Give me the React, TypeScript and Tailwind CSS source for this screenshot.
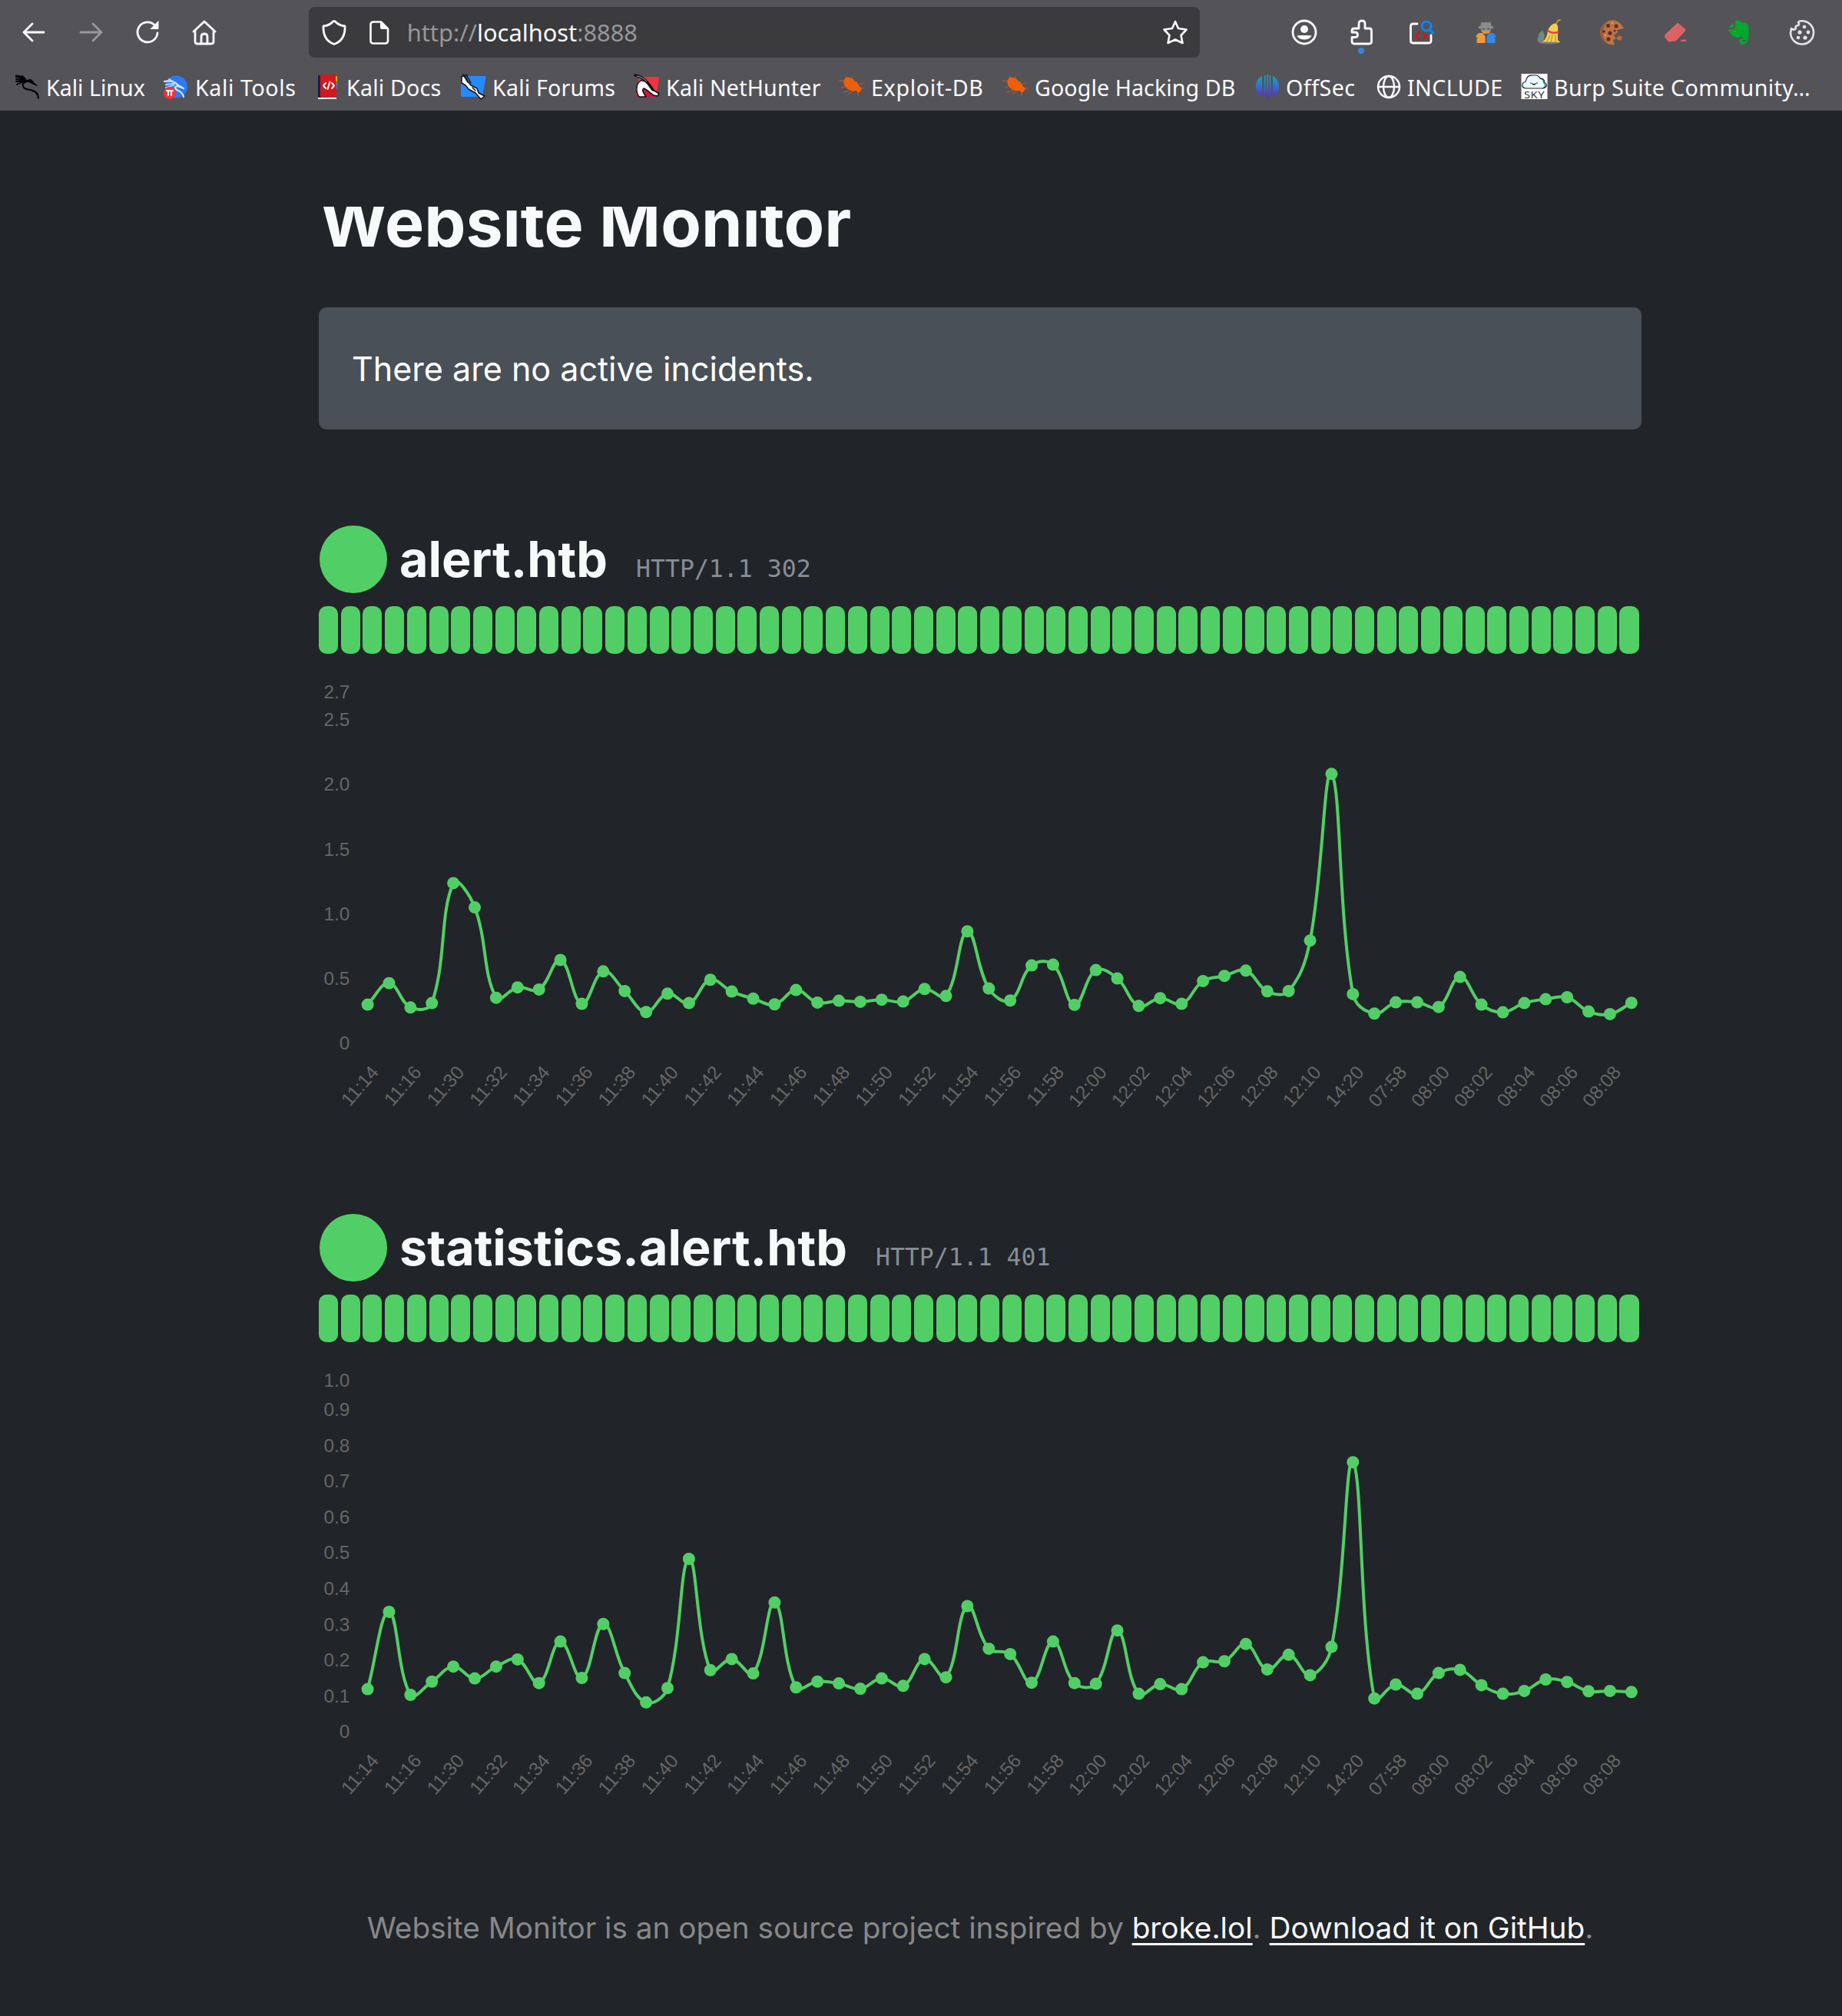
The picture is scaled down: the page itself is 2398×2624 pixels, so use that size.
import type { ReactNode } from "react";

type Site = {
  host: string;
  status: string;
  max: number;
  ticks: number[];
  values: number[];
};

const times = [
  "11:14", "11:16", "11:30", "11:32", "11:34", "11:36", "11:38", "11:40", "11:42", "11:44",
  "11:46", "11:48", "11:50", "11:52", "11:54", "11:56", "11:58", "12:00", "12:02", "12:04",
  "12:06", "12:08", "12:10", "14:20", "07:58", "08:00", "08:02", "08:04", "08:06", "08:08",
];

const sites: Site[] = [
  {
    host: "alert.htb",
    status: "HTTP/1.1 302",
    max: 2.712,
    ticks: [0, 0.5, 1, 1.5, 2, 2.5],
    values: [
      0.299, 0.465, 0.277, 0.311, 1.238, 1.05, 0.352, 0.432, 0.416, 0.644, 0.305, 0.556, 0.404, 0.242, 0.384,
      0.311, 0.491, 0.4, 0.345, 0.301, 0.412, 0.315, 0.329, 0.321, 0.337, 0.323, 0.42, 0.366, 0.865, 0.424,
      0.331, 0.602, 0.608, 0.297, 0.566, 0.501, 0.289, 0.349, 0.305, 0.481, 0.521, 0.562, 0.402, 0.404, 0.794,
      2.081, 0.38, 0.23, 0.317, 0.317, 0.281, 0.513, 0.299, 0.24, 0.311, 0.341, 0.356, 0.246, 0.226, 0.313,
    ],
  },
  {
    host: "statistics.alert.htb",
    status: "HTTP/1.1 401",
    max: 0.981,
    ticks: [0, 0.1, 0.2, 0.3, 0.4, 0.5, 0.6, 0.7, 0.8, 0.9],
    values: [
      0.119, 0.335, 0.103, 0.14, 0.182, 0.149, 0.182, 0.202, 0.136, 0.252, 0.15, 0.301, 0.164, 0.082, 0.122,
      0.483, 0.172, 0.203, 0.163, 0.361, 0.124, 0.14, 0.135, 0.12, 0.149, 0.128, 0.203, 0.152, 0.351, 0.232,
      0.217, 0.137, 0.252, 0.136, 0.134, 0.283, 0.106, 0.133, 0.119, 0.194, 0.197, 0.245, 0.174, 0.215, 0.158,
      0.237, 0.753, 0.093, 0.132, 0.106, 0.164, 0.173, 0.13, 0.106, 0.114, 0.146, 0.139, 0.113, 0.114, 0.111,
    ],
  },
];

// chart area inside the svg
const LEFT = 63.6;
const STEP = 27.885;
const BOTTOM = 487;
const HEIGHT = 457;
const TENSION = 0.4;

function curve(pts: { x: number; y: number }[]) {
  const ctrl = pts.map((p, i) => {
    const prev = pts[i - 1] || p;
    const next = pts[i + 1] || p;
    const d01 = Math.hypot(p.x - prev.x, p.y - prev.y);
    const d12 = Math.hypot(next.x - p.x, next.y - p.y);
    const fa = (TENSION * d01) / (d01 + d12);
    const fb = (TENSION * d12) / (d01 + d12);
    return {
      inX: p.x - fa * (next.x - prev.x),
      inY: p.y - fa * (next.y - prev.y),
      outX: p.x + fb * (next.x - prev.x),
      outY: p.y + fb * (next.y - prev.y),
    };
  });
  let d = `M${pts[0].x} ${pts[0].y}`;
  for (let i = 1; i < pts.length; i++) {
    const a = ctrl[i - 1];
    const b = ctrl[i];
    d += ` C${a.outX} ${a.outY} ${b.inX} ${b.inY} ${pts[i].x} ${pts[i].y}`;
  }
  return d;
}

const Chart = ({ site }: { site: Site }) => {
  const y = (v: number) => BOTTOM - (v / site.max) * HEIGHT;
  const pts = site.values.map((v, i) => ({ x: LEFT + i * STEP, y: y(v) }));
  return (
    <svg width="1722" height="600" viewBox="0 0 1722 600" className="mt-5 block font-['Liberation_Sans',sans-serif] text-[24.4px]">
      {[...site.ticks, site.max].map((t) => (
        <text key={t} x="40.3" y={y(t) + 8.3} textAnchor="end" fill="#666">
          {t === 0 ? "0" : t.toFixed(1)}
        </text>
      ))}
      {times.map((time, i) => {
        const x = LEFT + i * 2 * STEP + 15.5;
        return (
          <text key={time} x={x} y="525.5" textAnchor="end" fill="#666" transform={`rotate(-49 ${x} 525.5)`}>
            {time}
          </text>
        );
      })}
      <path d={curve(pts)} fill="none" stroke="#51cf66" strokeWidth="4" />
      {pts.map((p, i) => (
        <circle key={i} cx={p.x} cy={p.y} r="8" fill="#51cf66" />
      ))}
    </svg>
  );
};

const SiteSection = ({ site }: { site: Site }) => {
  return (
    <section className="h-[896px]">
      <div className="flex items-center">
        <span className="ml-px size-[88px] shrink-0 rounded-full bg-[#51cf66]" />
        <div className="ml-[16px] flex items-baseline">
          <h2 className="text-[64.6px] leading-[88px] font-bold text-[#f8f9fa]">{site.host}</h2>
          <span className="ml-[37px] font-['DejaVu_Sans_Mono',monospace] text-[31.5px] text-[#868e96]">{site.status}</span>
        </div>
      </div>
      <div className="mt-[17px] flex h-[62px]">
        {site.values.map((_, i) => (
          <div key={i} className="flex-1 pr-[3.7px]">
            <div className="h-full rounded-[10px] bg-[#51cf66]" />
          </div>
        ))}
      </div>
      <Chart site={site} />
    </section>
  );
};

const Icon = ({ children, className = "" }: { children: ReactNode; className?: string }) => (
  <svg
    viewBox="0 0 32 32"
    fill="none"
    strokeLinecap="round"
    strokeLinejoin="round"
    className={`size-8 shrink-0 overflow-visible ${className}`}
  >
    {children}
  </svg>
);

const Bug = () => (
  <Icon className="-ml-px mr-px">
    <path
      d="M12 8 L8 2 M17 9 L16 3 M21 14 L30 11 M24 17 L32 18 M8 9 L0 8 M9 15 L3 17 M14 20 L5 23 M19 21 L12 25 M24 21 L24 27"
      stroke="#ee5f0c"
      strokeOpacity="0.4"
      strokeWidth="1.8"
    />
    <ellipse cx="13.500" cy="12" rx="9.500" ry="7" transform="rotate(48 13.500 12)" fill="#ee5f0c" />
    <path d="M14 10 L22 9 L25 14 L29 19 L25 24 L21 21 L15 21Z" fill="#ee5f0c" />
  </Icon>
);

const bookmarks: { label: string; width: string; icon: ReactNode }[] = [
  {
    label: "Kali Linux",
    width: "w-[192px]",
    icon: (
      <Icon>
        <path d="M0 1 C6 0 11 3 14 7 L20 6 C24 8 25 13 29 14 L28 15 C23 13 20 11 17 10 C10 10 8 16 15 18 C24 20 31 21 31 31 L29 32 C29 24 24 22 16 20.500 C8 19 7 12 11 9 C7 5 4 4 0 4Z" fill="#000" />
        <path d="M1 6 L10 7 M1 9 L11 8.500 M2 13 L11 9 M13 6 L9 2" stroke="#000" strokeWidth="1.8" />
      </Icon>
    ),
  },
  {
    label: "Kali Tools",
    width: "w-[199px] tracking-[0.6px]",
    icon: (
      <Icon className="mr-0.5">
        <circle cx="17.500" cy="16" r="14.500" fill="#2b7bf3" />
        <path d="M2 9 C10 7 16 10 20 14 L27 18 C22 16 17 13 16 17 C16 22 25 19 27 29" stroke="#d5e8ff" strokeWidth="2.200" />
        <path d="M4 13 L15 12 M8 6 L17 11 M4 17 L14 14" stroke="#b9d8ff" strokeWidth="1.800" />
        <circle cx="9" cy="24" r="8" fill="#f0343c" />
        <path d="M5 21 H13 M7 21 V27 M11 21 V27" stroke="#fff" strokeWidth="2" />
      </Icon>
    ),
  },
  {
    label: "Kali Docs",
    width: "w-[189px] tracking-[0.2px]",
    icon: (
      <Icon>
        <path d="M3 1 H7 V31 H3Z" fill="#14204e" />
        <path d="M6 0 H27 V29 H6Z" fill="#d6171d" />
        <path d="M27 3 V8" stroke="#f2a814" strokeWidth="2" />
        <path d="M27.500 9 V13" stroke="#43a047" strokeWidth="2" />
        <path d="M27.500 14 V18" stroke="#2979d9" strokeWidth="2" />
        <path d="M3 31 H27" stroke="#fff" strokeWidth="2" strokeLinecap="butt" />
        <path d="M13 11 L10 14.500 L13 18 M21 11 L24 14.500 L21 18 M18.500 9.500 L15.500 19" stroke="#fff" strokeWidth="2" />
      </Icon>
    ),
  },
  {
    label: "Kali Forums",
    width: "w-[226px] tracking-[0.2px]",
    icon: (
      <Icon className="mr-px">
        <path d="M4 2 H31 Q33 2 32.500 4 L28 29 H2 Q0 29 0 27 V4 Q0 2 4 2Z" fill="#238bff" />
        <path d="M1 3 L5 1 L9 9 L13 14 L21 18 L23 24 L31 28 L26 32 L19 24 L10 19 L6 14 L1 11Z" fill="#fff" stroke="#111" strokeWidth="1.500" />
        <path d="M7 0 L13 11 M3 0 L9 10 M15 17 L19 21" stroke="#111" strokeWidth="1.500" />
      </Icon>
    ),
  },
  {
    label: "Kali NetHunter",
    width: "w-[266px] tracking-[0.2px]",
    icon: (
      <Icon className="mr-px">
        <path d="M6 3 H30 Q32 3 32 6 L28 29 H5 Q2 29 2 25Z" fill="#f5303f" />
        <path d="M2 29 L14 12 L29 29Z" fill="#c91642" />
        <path d="M6 29 C2 24 1 13 8 8 C16 7 19 14 24 20 L32 25 L30 28 L25 27 C20 24 16 19 12 18 C9 20 12 25 15 29Z" fill="#fff" stroke="#111" strokeWidth="1.500" />
        <path d="M24 20 C18 12 14 4 1 1" stroke="#111" strokeWidth="3.500" />
        <path d="M16 9 C12 5 8 3 3 2" stroke="#aaa" strokeWidth="1" />
      </Icon>
    ),
  },
  { label: "Exploit-DB", width: "w-[214px] pl-0.5 tracking-[0.7px]", icon: <Bug /> },
  { label: "Google Hacking DB", width: "w-[328px] pl-px tracking-[0.1px]", icon: <Bug /> },
  {
    label: "OffSec",
    width: "w-[158px] tracking-[0.5px]",
    icon: (
      <Icon>
        <defs>
          <linearGradient id="offsec" x1="0" y1="0" x2="0" y2="1" gradientUnits="objectBoundingBox">
            <stop offset="0" stopColor="#08b3c4" />
            <stop offset="1" stopColor="#6126d8" />
          </linearGradient>
        </defs>
        <path
          d="M9 2 V29 C-2 23 -2 8 9 2Z M23 2 V29 C34 23 34 8 23 2Z M12 1 H13.500 V27 H11Z M15.300 0 H16.700 L17.500 31 H14.500Z M18.500 1 H20 L21 27 H18.500Z"
          fill="url(#offsec)"
        />
      </Icon>
    ),
  },
  {
    label: "INCLUDE",
    width: "w-[189px] tracking-[0.4px]",
    icon: (
      <Icon>
        <g stroke="#fff" strokeWidth="2.400">
          <circle cx="16" cy="16" r="14" />
          <ellipse cx="16" cy="16" rx="7" ry="14" />
          <path d="M2 16 H30" />
        </g>
      </Icon>
    ),
  },
  {
    label: "Burp Suite Community…",
    width: "w-[400px] tracking-[0.4px]",
    icon: (
      <Icon className="mr-0.5">
        <rect x="-0.500" y="-1" width="34" height="33" fill="#fff" />
        <path d="M24 4 C31 5 30 10 29 11 C34 14 32 18 27 18 L20 18Z" fill="#2d9fe0" />
        <path d="M5 18 C-1 17 0 10 5 9.500 C6 4 9 0 15 1 C20 0 23 3 24 6 C28 7 28 9 28 11 C31 13 30 17 26 18Z" fill="#eaf7fe" />
        <path d="M5 18 C-1 17 0 10 5 9.500 C6 4 9 0 15 1 C20 0 23 3 24 5 C29 5 30 8 29 10 C34 13 33 17 27 18Z" stroke="#222" strokeWidth="1.200" />
        <path d="M14 12 Q16 14 18 12 M12 11 V11.300 M20 11 V11.300" stroke="#222" strokeWidth="1.500" />
        <text x="16.500" y="31" textAnchor="middle" fontSize="12.500" textLength="27" lengthAdjust="spacingAndGlyphs" fill="#333" className="font-['Noto_Sans',sans-serif]">
          SKY
        </text>
      </Icon>
    ),
  },
];

const Toolbar = () => (
  <div className="flex h-[82px] items-center pt-px pl-[27px] text-[#fbfbfe]">
    <div className="flex gap-[42.4px]">
      <Icon>
        <path d="M15 5 L4 16 L15 27 M4 16 H30" stroke="currentColor" strokeWidth="2.800" />
      </Icon>
      <Icon>
        <path d="M20 5 L31 16 L20 27 M31 16 H4" stroke="#99989c" strokeWidth="2.800" />
      </Icon>
      <Icon>
        <path d="M29 17 A13 13 0 1 1 26 7.500" stroke="currentColor" strokeWidth="2.800" />
        <path d="M30 2 V11.500 H20.500Z" fill="currentColor" stroke="currentColor" strokeWidth="1" />
      </Icon>
      <Icon>
        <path d="M2 15 L16 2 L30 15 M4 14 V28 Q4 31 7 31 H25 Q28 31 28 28 V14" stroke="currentColor" strokeWidth="2.800" />
        <path d="M12 31 V22 Q12 18 16 18 Q20 18 20 22 V31" stroke="currentColor" strokeWidth="2.800" />
      </Icon>
    </div>

    <div className="ml-[120px] flex h-[66px] w-[1160px] items-center rounded-lg bg-[#3b3b3d] px-4">
      <Icon className="ml-px">
        <path d="M16 1.500 Q17.200 1.500 18 2.500 Q22 7 30 8 C30.500 20 26 28 16 31.500 C6 28 1.500 20 2 8 Q10 7 14 2.500 Q14.800 1.500 16 1.500Z" stroke="currentColor" strokeWidth="2.800" />
      </Icon>
      <Icon className="ml-[25.5px]">
        <path d="M9 2.500 H19 L28 11.500 V27 Q28 30.500 24.500 30.500 H9 Q5.500 30.500 5.500 27 V6 Q5.500 2.500 9 2.500Z" stroke="currentColor" strokeWidth="2.600" />
        <path d="M18 2 L28.500 12 H20 Q18 12 18 10Z" fill="currentColor" />
      </Icon>
      <span className="ml-[21px] pt-0.5 text-[30.8px] text-[#97979a]">
        http://<span className="text-[#fbfbfe]">localhost</span>:8888
      </span>
      <Icon className="ml-auto">
        <path d="M16 2 L20 11 L30.500 12.500 L23.500 20 L25.500 30 L16 25.500 L6.500 30 L8.500 20 L1.500 12.500 L12 11Z" stroke="currentColor" strokeWidth="2.600" />
      </Icon>
    </div>

    <Icon className="ml-[119.500px]">
      <circle cx="16" cy="16" r="15" stroke="currentColor" strokeWidth="2.800" />
      <circle cx="16" cy="12" r="5" fill="currentColor" />
      <path d="M6.500 21 Q7 20 9 20 H23 Q25 20 25.500 21 Q22 25.500 16 25.500 Q10 25.500 6.500 21Z" fill="currentColor" />
    </Icon>
    <div className="relative ml-[43.5px]">
      <Icon>
        <path d="M12 11 V5 Q12 1 16 1 Q20 1 20 5 V11 H25.500 Q28.500 11 28.500 14 V28 Q28.500 31 25.500 31 H6 Q3 31 3 28 V22.500 H7 Q10.500 22.500 10.500 19.500 Q10.500 16 7 16 H3 V14 Q3 11 6 11Z" stroke="currentColor" strokeWidth="2.800" />
      </Icon>
      <span className="absolute top-9 left-[11px] size-2 rounded-full bg-[#3584e4]" />
    </div>
    <Icon className="ml-[46px]">
      <path d="M10 5 H4.500 Q1.500 5 1.500 8 V27 Q1.500 30 4.500 30 H25 Q28 30 28 27 V20" stroke="#fff" strokeWidth="2.800" />
      <path d="M12 17 L8 21 L12 25 M18 17 L22 21 L18 25" stroke="#f00" strokeWidth="2" />
      <circle cx="22" cy="8" r="6" stroke="#0a84ff" strokeWidth="3" />
      <path d="M26 12.500 L30.500 17" stroke="#0a84ff" strokeWidth="3.400" />
    </Icon>
    {/* private browsing */}
    <Icon className="ml-[50.5px]">
      <path d="M9.500 8 L10.500 2.500 L14 3.500 L16.500 2.500 L19 3.500 L22.500 2.500 L23.500 8 L26.500 8.500 L25.500 11 L23 11.500 L22 16 H11 L10 11.500 L7 11 L6.500 8.500Z" fill="#8c8c8c" />
      <path d="M10.500 14.500 H22.500 Q21 18 16.500 18 Q12 18 10.500 14.500Z" fill="#e8913a" />
      <path d="M3.500 20.500 L7 17 H12 L15.500 21 V30 H4.500 V25 L6 22 L4 23Z" fill="#ef9b3c" />
      <path d="M29.500 20.500 L26 17 H21 L17.500 21 V30 H28.500 V25 L27 22 L29 23Z" fill="#338ae8" />
      <path d="M12 11.500 H14.500 M18.500 11.500 H21" stroke="#55555a" strokeWidth="1.500" />
    </Icon>
    {/* cleaner */}
    <Icon className="ml-[50.5px]">
      <ellipse cx="17" cy="29" rx="14" ry="2.600" fill="#77777a" />
      <path d="M2 28 C0 22 4 24 3 19 C4 15 7 16 8 13 L11 20 L9 29Z" fill="#73897a" />
      <path d="M15 14 Q18 5 26 4 Q29 7 28 16 L28 26 L31 29 L8 28.500 Q14 24 15 14Z" fill="#f1cf53" />
      <path d="M15 14 Q20 18 28 16" stroke="#e8403b" strokeWidth="2.500" />
      <path d="M14 28 L18 20 M19 29 L21 20 M25 29 L25 20" stroke="#b88a1c" strokeWidth="1" />
      <path d="M26 5 L28 1 L31 0" stroke="#b79423" strokeWidth="2" />
    </Icon>
    <Icon className="ml-[50px]">
      <path d="M20 0.500 A16 16 0 1 0 20 32 L18 26 L22 24 L19 20 L24 16 L23 13 L32 11 Q28 3 20 0.500Z" fill="#bd7446" />
      <path d="M13 1 A16 16 0 0 0 14 32 Q3 26 5 14 Q6 6 13 1Z" fill="#9a5937" />
      <path d="M22 23 L26 20 L30 22 L28 27 L24 26Z" fill="#b36b40" />
      <g fill="#5c2c28">
        <circle cx="11.500" cy="7.500" r="2.500" />
        <circle cx="22" cy="8" r="2.500" />
        <circle cx="6" cy="15" r="1.800" />
        <circle cx="14" cy="17" r="2.600" />
        <circle cx="12" cy="25" r="2.500" />
        <circle cx="20" cy="14" r="1.500" />
      </g>
      <circle cx="17" cy="4" r="1" fill="#f0c060" />
      <circle cx="8" cy="20" r="1" fill="#f0c060" />
    </Icon>
    <Icon className="ml-[51px]">
      <path d="M19 5.500 L28 13 L16 26 L8 27 L3.500 22 L4 19.500Z" fill="#dc6266" stroke="#dc6266" strokeWidth="3" />
      <path d="M22 28 L25 25.500 H30 V28Z" fill="#dc6266" />
    </Icon>
    <Icon className="ml-[50px]">
      <path
        d="M12 1 C16 -1 19 2 20 3 L27 4 C31 8 30 22 28 28 C26 33 17 33 17 28 C17 25 19 24 22 24 C22 21 20 20 18 23 C12 24 5 20 3 12 H9 Q12 12 12 9Z M3 10 L10 3 V9 Q10 10 9 10Z"
        fill="#00a82d"
      />
      <path d="M21 16 Q23 13 25 16Z" fill="#545358" />
      <path d="M22 27 H25" stroke="#545358" strokeWidth="2" />
    </Icon>
    <Icon className="ml-[51px]">
      <path d="M13 1.500 C24 0 31 8 31 16 A15 15 0 0 1 1 17 L2 11 Q5 14 8 11 Q6 8 11 7 Q13 5 11 3Z" stroke="#e4e4e6" strokeWidth="2.600" />
      <g fill="#e4e4e6">
        <circle cx="19" cy="9" r="2.300" />
        <circle cx="13" cy="16" r="2.600" />
        <circle cx="24" cy="16" r="2.400" />
        <circle cx="11" cy="23" r="2.300" />
        <circle cx="20" cy="23" r="2.600" />
      </g>
    </Icon>
  </div>
);

export default function App() {
  return (
    <div className="h-[2624px] w-[2398px] overflow-hidden bg-[#212529] font-['Inter',sans-serif]">
      <header className="h-36 bg-[#545358] font-['Noto_Sans',sans-serif]">
        <Toolbar />
        <div className="flex h-[62px] items-center pt-px pl-5 text-[28.6px] text-[#fbfbfe]">
          {bookmarks.map((b) => (
            <div key={b.label} className={`flex shrink-0 items-center gap-2 whitespace-nowrap ${b.width}`}>
              {b.icon}
              <span className="pt-0.5">{b.label}</span>
            </div>
          ))}
        </div>
      </header>

      <main className="ml-[415px] w-[1722px] pt-[125px]">
        {/* title is scrolled partly out of view */}
        <div className="h-20 overflow-hidden">
          <h1 className="-mt-[23px] pl-px text-[86px] leading-[88px] font-bold text-[#f8f9fa]">Website Monitor</h1>
        </div>
        <div className="mt-[51px] mb-[125px] flex h-[159px] items-center rounded-[10px] bg-[#495057] px-[43px] pt-px text-[43.05px] text-white">
          There are no active incidents.
        </div>
        {sites.map((site) => (
          <SiteSection key={site.host} site={site} />
        ))}
        <footer className="pt-[3px] text-center text-[38.72px] leading-[60px] text-[#888]">
          Website Monitor is an open source project inspired by{" "}
          <a className="text-[#f8f9fa] underline decoration-[3px] underline-offset-[6px] [text-decoration-skip-ink:none]">broke.lol</a>.{" "}
          <a className="text-[#f8f9fa] underline decoration-[3px] underline-offset-[6px] [text-decoration-skip-ink:none]">Download it on GitHub</a>.
        </footer>
      </main>
    </div>
  );
}
